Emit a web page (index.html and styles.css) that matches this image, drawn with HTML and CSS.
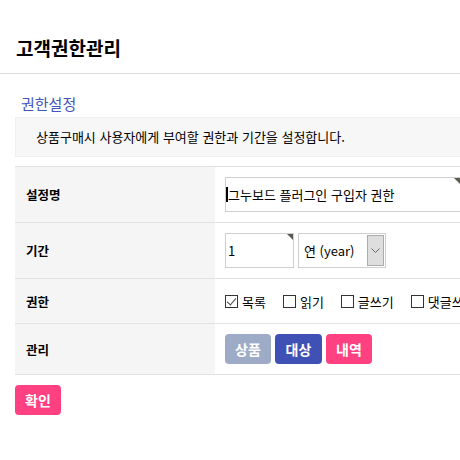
FILE: index.html
```html
<!DOCTYPE html>
<html lang="ko">
<head>
    <meta charset="UTF-8">
    <title>고객권한관리</title>
    <link rel="stylesheet" href="styles.css">
</head>
<body>
<h1 class="page-title">고객권한관리</h1>
<div class="wrap">
    <h2 class="sec-title">권한설정</h2>
    <div class="desc">상품구매시 사용자에게 부여할 권한과 기간을 설정합니다.</div>

    <div class="form-table">
        <div class="row row-input">
            <div class="label">설정명</div>
            <div class="cell">
                <span class="field field-name caret">
                    <input type="text" class="inp" value="그누보드 플러그인 구입자 권한">
                </span>
            </div>
        </div>
        <div class="row row-input">
            <div class="label">기간</div>
            <div class="cell">
                <span class="field field-num">
                    <input type="text" class="inp" value="1">
                </span>
                <span class="select-box">
                    <span class="select-val">연 (year)</span>
                    <span class="select-arrow">
                        <svg width="9" height="5" viewBox="0 0 9 5"><path d="M0.5 0.5 L4.5 4.5 L8.5 0.5" fill="none" stroke="#666" stroke-width="1"/></svg>
                    </span>
                </span>
            </div>
        </div>
        <div class="row row-check">
            <div class="label">권한</div>
            <div class="cell checks">
                <label class="chk"><input type="checkbox" checked><span>목록</span></label>
                <label class="chk"><input type="checkbox"><span>읽기</span></label>
                <label class="chk"><input type="checkbox"><span>글쓰기</span></label>
                <label class="chk"><input type="checkbox"><span>댓글쓰기</span></label>
            </div>
        </div>
        <div class="row row-btn">
            <div class="label">관리</div>
            <div class="cell btns">
                <button class="btn btn-gray">상품</button>
                <button class="btn btn-blue">대상</button>
                <button class="btn btn-pink">내역</button>
            </div>
        </div>
    </div>

    <button class="btn btn-pink btn-submit">확인</button>
</div>
</body>
</html>
```

FILE: styles.css
```css
html, body {
    margin: 0;
    padding: 0;
    overflow: hidden;
    background: #fff;
    color: #000;
    font-family: "Noto Sans CJK KR", "Noto Sans", sans-serif;
}

.page-title {
    margin: 0;
    padding: 35px 16px 12px;
    font-size: 19px;
    line-height: 26px;
    font-weight: bold;
    border-bottom: 1px solid #dcdcdc;
}

.wrap {
    width: 560px;
    padding: 0 15px;
}

.sec-title {
    margin: 20px 0 3px 6px;
    font-size: 15px;
    line-height: 20px;
    font-weight: normal;
    color: #4356bb;
}

.desc {
    padding: 0 20px;
    font-size: 13px;
    line-height: 38px;
    background: #f7f7f7;
    border: 1px solid #f0f0f0;
}

.form-table {
    margin-top: 9px;
    border-top: 1px solid #e2e2e2;
}

.row {
    display: grid;
    grid-template-columns: 200px 1fr;
    border-bottom: 1px solid #e2e2e2;
}
.row-input { height: 55px; }
.row-check { height: 44px; }
.row-btn { height: 50px; }

.label {
    display: flex;
    align-items: center;
    padding-left: 11px;
    background: #f5f5f5;
    font-size: 12.5px;
    font-weight: bold;
}

.cell {
    display: flex;
    align-items: center;
    padding-left: 10px;
}

.field {
    position: relative;
    display: inline-block;
}
.field::after {
    content: "";
    position: absolute;
    top: 1px;
    right: 1px;
    border-top: 6px solid #5b5b52;
    border-left: 6px solid transparent;
}

.inp {
    display: block;
    box-sizing: border-box;
    height: 35px;
    margin: 0;
    padding: 0 0 0 2px;
    border: 1px solid #cfcfcf;
    outline: none;
    font-family: inherit;
    font-size: 13px;
    color: #000;
    background: #fff;
}
.field-name .inp { width: 236px; }
.field-num .inp { width: 69px; }

.caret::before {
    content: "";
    position: absolute;
    left: 1px;
    top: 10px;
    width: 2px;
    height: 15px;
    background: #000;
}

.select-box {
    display: flex;
    box-sizing: border-box;
    width: 88px;
    height: 35px;
    margin-left: 4px;
    border: 1px solid #cfcfcf;
}
.select-val {
    flex: 1;
    padding-left: 5px;
    font-size: 13px;
    line-height: 33px;
}
.select-arrow {
    display: flex;
    align-items: center;
    justify-content: center;
    width: 15px;
    margin: 1px;
    background: #dedede;
    border: 1px solid #ababab;
}

.checks { gap: 17px; }
.chk {
    display: flex;
    align-items: center;
    font-size: 13px;
    white-space: nowrap;
}
.chk input {
    appearance: none;
    position: relative;
    width: 13px;
    height: 13px;
    margin: 0 4px 0 0;
    border: 1px solid #333;
    background: #fff;
}
.chk input:checked::after {
    content: "";
    position: absolute;
    left: 3px;
    top: 0;
    width: 4px;
    height: 8px;
    border-right: 1px solid #444;
    border-bottom: 1px solid #444;
    transform: rotate(40deg);
}

.btns { gap: 4px; }
.btn {
    box-sizing: border-box;
    height: 30px;
    width: 46px;
    padding: 0;
    border: none;
    border-radius: 4px;
    color: #fff;
    font-family: inherit;
    font-size: 14px;
    font-weight: bold;
}
.btn-blue { width: 47px; background: #3f51b5; }
.btn-gray { background: #9eabc7; }
.btn-pink { background: #ff4081; }

.btn-submit {
    margin-top: 10px;
}
```
